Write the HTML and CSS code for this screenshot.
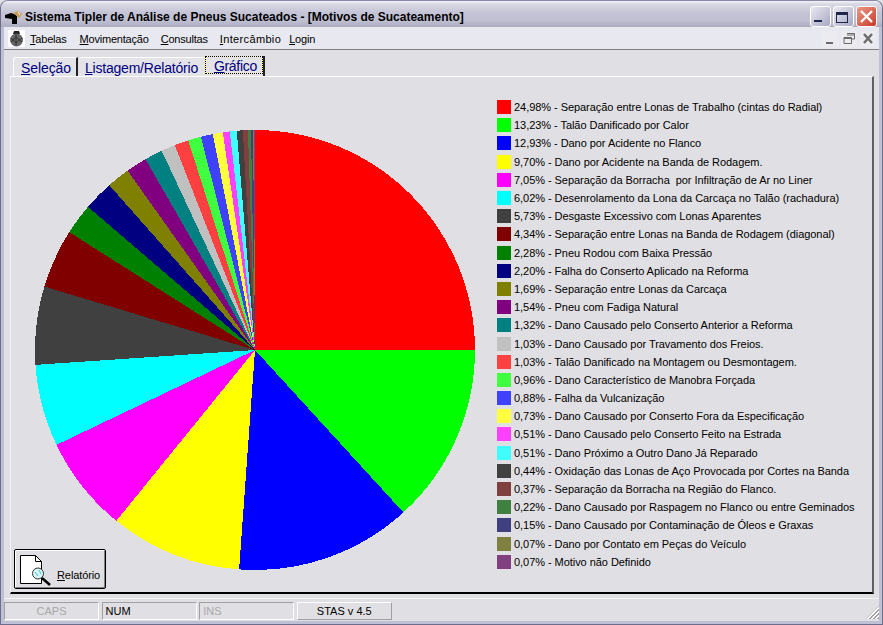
FILE: index.html
```html
<!DOCTYPE html>
<html lang="pt-BR">
<head>
<meta charset="UTF-8">
<title>Sistema Tipler de Análise de Pneus Sucateados</title>
<link rel="stylesheet" href="styles.css">
</head>
<body>
<div class="window">
  <div class="titlebar">
    <svg class="app-icon" width="18" height="18" viewBox="0 0 18 18">
      <path d="M0 9 L6 7 L9 8 L12 10 L12 18 L7 18 L7 13 L0 12 Z" fill="#000"/>
      <path d="M8 7 L13 5 L17 8 L14 12 L11 9 Z" fill="#c89a50"/>
      <path d="M13 6 L15 9" stroke="#fff" stroke-width="1"/>
    </svg>
    <span class="title-text">Sistema Tipler de Análise de Pneus Sucateados - [Motivos de Sucateamento]</span>
    <div class="win-buttons">
      <div class="win-btn">
        <svg width="21" height="21" viewBox="0 0 21 21"><rect x="4" y="14" width="8" height="2" fill="#20264a"/></svg>
      </div>
      <div class="win-btn">
        <svg width="21" height="21" viewBox="0 0 21 21"><path d="M3 6 H15 V17 H3 Z M4 9 V16 H14 V9 Z" fill="#20264a" fill-rule="evenodd"/></svg>
      </div>
      <div class="win-btn close">
        <svg width="21" height="21" viewBox="0 0 21 21"><path d="M5 5 L16 16 M16 5 L5 16" stroke="#fff" stroke-width="2.4"/></svg>
      </div>
    </div>
  </div>

  <div class="client">
    <div class="menubar">
      <svg class="menu-icon" width="17" height="17" viewBox="0 0 17 17">
        <rect width="17" height="17" fill="#fff"/>
        <path d="M6 1 H11 L12 4 L5 4 Z" fill="#222"/>
        <circle cx="8.500" cy="10" r="6.500" fill="#666"/>
        <path d="M3 8 L8 13 L14 8 M3 12 L8 7 L14 12 M8 4 V16" stroke="#333" stroke-width="1" fill="none"/>
      </svg>
      <span class="menu-item"><u>T</u>abelas</span>
      <span class="menu-item"><u>M</u>ovimentação</span>
      <span class="menu-item"><u>C</u>onsultas</span>
      <span class="menu-item wide"><u>I</u>ntercâmbio</span>
      <span class="menu-item"><u>L</u>ogin</span>
      <div class="mdi-buttons">
        <div class="mdi-btn"><svg width="16" height="16" viewBox="0 0 16 16"><rect x="4" y="11" width="7" height="2" fill="#6b6b6b"/></svg></div>
        <div class="mdi-btn"><svg width="16" height="16" viewBox="0 0 16 16"><path d="M6 2.500 H13.500 V8 H11 M3 6.500 H10.500 V12.500 H3 Z M6 4 H13 M3 7.500 H10" fill="none" stroke="#6b6b6b"/></svg></div>
        <div class="mdi-btn"><svg width="16" height="16" viewBox="0 0 16 16"><path d="M4 3 L12 12 M12 3 L4 12" stroke="#6b6b6b" stroke-width="2.400"/></svg></div>
      </div>
    </div>

    <div class="tabs">
      <div class="tab"><u>S</u>eleção</div>
      <div class="tab second"><u>L</u>istagem/Relatório</div>
      <div class="tab active"><span class="tab-focus"><u>G</u>ráfico</span></div>
    </div>

    <div class="panel">
      <div class="chart" id="chart"></div>
      <ul class="legend" id="legend"></ul>
      <button class="report-btn">
        <svg width="40" height="34" viewBox="0 0 40 34">
          <path d="M2.500 3.500 H17.500 L23.500 9.500 V31.500 H2.500 Z" fill="#fff" stroke="#000"/>
          <path d="M17.500 3.500 V9.500 H23.500" fill="none" stroke="#000"/>
          <path d="M24 26 L32 33" stroke="#000" stroke-width="2.500"/>
          <circle cx="20" cy="21.500" r="5.500" fill="#d8f4f4" stroke="#333"/>
          <path d="M17 20 L20 24 M21 18 L23 22" stroke="#3cc" stroke-width="1"/>
        </svg>
        <span class="report-label"><u>R</u>elatório</span>
      </button>
    </div>

    <div class="statusbar">
      <div class="status-cell off">CAPS</div>
      <div class="status-cell left">NUM</div>
      <div class="status-cell off left">INS</div>
      <div class="status-cell version">STAS v 4.5</div>
      <div class="grip"></div>
    </div>
  </div>
</div>
<script src="script.js"></script>
</body>
</html>
```
FILE: styles.css
```css
html, body, div, ul, li, button, span {
  margin: 0;
  padding: 0;
  box-sizing: border-box;
}

body {
  width: 883px;
  height: 625px;
  overflow: hidden;
  font-family: "Liberation Sans", Arial, sans-serif;
  font-size: 11px;
  color: #000;
  background: #e0dfe3;
}

.window {
  width: 883px;
  height: 625px;
  display: flex;
  flex-direction: column;
  background: #c0c0d4;
  border-radius: 8px 8px 0 0;
  border: 1px solid #6c6c8c;
  border-top-color: #8888a8;
}

.titlebar {
  height: 26px;
  flex: none;
  display: flex;
  align-items: flex-start;
  padding: 5px 5px 0 4px;
  border-radius: 7px 7px 0 0;
  background: linear-gradient(#f2f2f6 0, #d8d8e4 12%, #c4c4d6 45%, #c0c0d2 75%, #acacc2 100%);
}

.app-icon {
  flex: none;
  margin-right: 2px;
}

.title-text {
  margin-top: 4px;
  font-weight: bold;
  font-size: 12px;
  color: #000;
  white-space: nowrap;
}

.win-buttons {
  margin-left: auto;
  display: flex;
  gap: 2px;
}

.win-btn {
  width: 21px;
  height: 21px;
  border-radius: 3px;
  border: 1px solid #fff;
  background: linear-gradient(135deg, #e8e8f2, #a8a8c4);
  overflow: hidden;
}

.win-btn svg {
  display: block;
  margin: -1px;
}

.win-btn.close {
  background: linear-gradient(135deg, #ec9a88, #c83a28);
}

.client {
  flex: 1;
  display: flex;
  flex-direction: column;
  margin: 0 3px 3px 3px;
  background: #e0dfe3;
  min-height: 0;
}

.menubar {
  height: 23px;
  flex: none;
  display: flex;
  align-items: center;
  padding: 1px 3px 0 4px;
  border-bottom: 1px solid #808080;
  box-shadow: 0 1px 0 #fff;
  background: #e8e8f0;
}

.menu-icon {
  flex: none;
  margin-right: 5px;
}

.menu-item {
  margin-right: 12px;
  font-size: 11px;
  letter-spacing: -0.2px;
  white-space: nowrap;
}

.menu-item:first-of-type {
  margin-right: 13px;
}

.menu-item.wide {
  margin-right: 8px;
  letter-spacing: 0.35px;
}

.mdi-buttons {
  margin-left: auto;
  display: flex;
  gap: 3px;
}

.mdi-btn {
  width: 16px;
  height: 16px;
  background: #ecebef;
}

.mdi-btn svg {
  display: block;
}

.tabs {
  flex: none;
  height: 26px;
  display: flex;
  align-items: flex-end;
  padding-left: 9px;
  background: #e0dfe3;
}

.tab {
  height: 19px;
  padding: 0 5px 0 7px;
  font-size: 14px;
  letter-spacing: -0.1px;
  line-height: 20px;
  color: #000080;
  background: #e4e3e7;
  border-left: 1px solid #fff;
  border-right: 2px solid #222;
  border-top: 1px solid #fff;
  border-radius: 3px 0 0 0;
  white-space: nowrap;
}

.tab.second {
  padding-left: 6px;
  border-left: 0;
  border-right: 0;
  margin-left: 1px;
  width: 126px;
  letter-spacing: -0.2px;
}

.tab.active {
  height: 20px;
  padding: 0;
  border: 0;
  border-right: 2px solid #222;
  letter-spacing: -0.3px;
  line-height: 19px;
}

.tab-focus {
  display: block;
  height: 18px;
  padding: 0 5px 0 8px;
  border: 1px dotted #000;
  background: linear-gradient(#e4e3e7, #e4e3e7) padding-box, #ffff70 border-box;
}

.panel {
  position: relative;
  flex: none;
  height: 518px;
  margin-left: 6px;
  width: 864px;
  display: flex;
  background: #e0dfe3;
  border-top: 1px solid #fff;
  border-left: 1px solid #f4f4f4;
  border-right: 2px solid #606060;
  border-bottom: 2px solid #000;
}

.chart {
  flex: none;
  width: 486px;
  padding: 53px 0 0 24px;
}

.chart svg {
  display: block;
}

.legend {
  list-style: none;
  padding-top: 21px;
}

.legend-row {
  height: 18.2px;
  display: flex;
  align-items: center;
  white-space: pre;
  font-size: 11px;
  letter-spacing: -0.05px;
}

.swatch {
  width: 14px;
  height: 14px;
  flex: none;
  margin-right: 3px;
}

.report-btn {
  position: absolute;
  left: 3px;
  bottom: 3px;
  width: 92px;
  height: 40px;
  display: flex;
  align-items: flex-start;
  padding: 2px 0 0 3px;
  background: #e0dfe3;
  border: 1px solid #000;
  border-radius: 2px;
  box-shadow: inset 1px 1px 0 #fff, inset -1px -1px 0 #808080;
  font-family: inherit;
  font-size: 11px;
  letter-spacing: -0.1px;
  color: #000;
}

.report-label {
  margin: 17px 0 0 -1px;
}

.statusbar {
  flex: none;
  display: flex;
  gap: 2.6px;
  height: 22px;
  margin-top: 4px;
  padding-top: 3px;
  position: relative;
  border-top: 1px solid #f4f4f0;
}

.status-cell {
  width: 95px;
  height: 18px;
  line-height: 16px;
  text-align: center;
  border-top: 1px solid #a0a0a0;
  border-left: 1px solid #a0a0a0;
  border-right: 1px solid #fff;
  border-bottom: 1px solid #fff;
  font-size: 11px;
}

.status-cell.left {
  text-align: left;
  padding-left: 3px;
}

.status-cell.off {
  color: #a8a8a8;
}

.status-cell.version {
  border-top-color: #fff;
  border-left-color: #fff;
  border-right-color: #a0a0a0;
  border-bottom-color: #a0a0a0;
}

.grip {
  position: absolute;
  right: 0;
  bottom: 1px;
  width: 13px;
  height: 13px;
  background: repeating-linear-gradient(135deg, #a0a0a0 0, #a0a0a0 1px, #fff 1px, #fff 2.800px);
  clip-path: polygon(100% 0, 100% 100%, 0 100%);
}
```
FILE: script.js
```js
const reasons = [
  ['24,98', '#ff0000', 'Separação entre Lonas de Trabalho (cintas do Radial)'],
  ['13,23', '#00ff00', 'Talão Danificado por Calor'],
  ['12,93', '#0000ff', 'Dano por Acidente no Flanco'],
  ['9,70', '#ffff00', 'Dano por Acidente na Banda de Rodagem.'],
  ['7,05', '#ff00ff', 'Separação da Borracha  por Infiltração de Ar no Liner'],
  ['6,02', '#00ffff', 'Desenrolamento da Lona da Carcaça no Talão (rachadura)'],
  ['5,73', '#404040', 'Desgaste Excessivo com Lonas Aparentes'],
  ['4,34', '#800000', 'Separação entre Lonas na Banda de Rodagem (diagonal)'],
  ['2,28', '#008000', 'Pneu Rodou com Baixa Pressão'],
  ['2,20', '#000080', 'Falha do Conserto Aplicado na Reforma'],
  ['1,69', '#808000', 'Separação entre Lonas da Carcaça'],
  ['1,54', '#800080', 'Pneu com Fadiga Natural'],
  ['1,32', '#008080', 'Dano Causado pelo Conserto Anterior a Reforma'],
  ['1,03', '#c0c0c0', 'Dano Causado por Travamento dos Freios.'],
  ['1,03', '#ff4040', 'Talão Danificado na Montagem ou Desmontagem.'],
  ['0,96', '#40ff40', 'Dano Característico de Manobra Forçada'],
  ['0,88', '#4040ff', 'Falha da Vulcanização'],
  ['0,73', '#ffff40', 'Dano Causado por Conserto Fora da Especificação'],
  ['0,51', '#ff40ff', 'Dano Causado pelo Conserto Feito na Estrada'],
  ['0,51', '#40ffff', 'Dano Próximo a Outro Dano Já Reparado'],
  ['0,44', '#404040', 'Oxidação das Lonas de Aço Provocada por Cortes na Banda'],
  ['0,37', '#804040', 'Separação da Borracha na Região do Flanco.'],
  ['0,22', '#408040', 'Dano Causado por Raspagem no Flanco ou entre Geminados'],
  ['0,15', '#404080', 'Dano Causado por Contaminação de Óleos e Graxas'],
  ['0,07', '#808040', 'Dano por Contato em Peças do Veículo'],
  ['0,07', '#804080', 'Motivo não Definido']
];

const legend = document.getElementById('legend');
const radius = 220;
let paths = '';
let total = 0;

reasons.forEach(reason => {
  const value = parseFloat(reason[0].replace(',', '.'));
  const start = total / 99.98 * 2 * Math.PI;
  total += value;
  const end = total / 99.98 * 2 * Math.PI;
  const large = end - start > Math.PI ? 1 : 0;
  const x1 = radius + radius * Math.sin(start);
  const y1 = radius - radius * Math.cos(start);
  const x2 = radius + radius * Math.sin(end);
  const y2 = radius - radius * Math.cos(end);
  paths += `<path d="M${radius} ${radius} L${x1} ${y1} A${radius} ${radius} 0 ${large} 1 ${x2} ${y2} Z" fill="${reason[1]}"/>`;

  const row = document.createElement('li');
  row.classList.add('legend-row');
  const swatch = document.createElement('span');
  swatch.classList.add('swatch');
  swatch.style.background = reason[1];
  row.appendChild(swatch);
  row.appendChild(document.createTextNode(`${reason[0]}% - ${reason[2]}`));
  legend.appendChild(row);
});

document.getElementById('chart').innerHTML =
  `<svg width="440" height="440" viewBox="0 0 440 440" shape-rendering="crispEdges">${paths}</svg>`;
```
